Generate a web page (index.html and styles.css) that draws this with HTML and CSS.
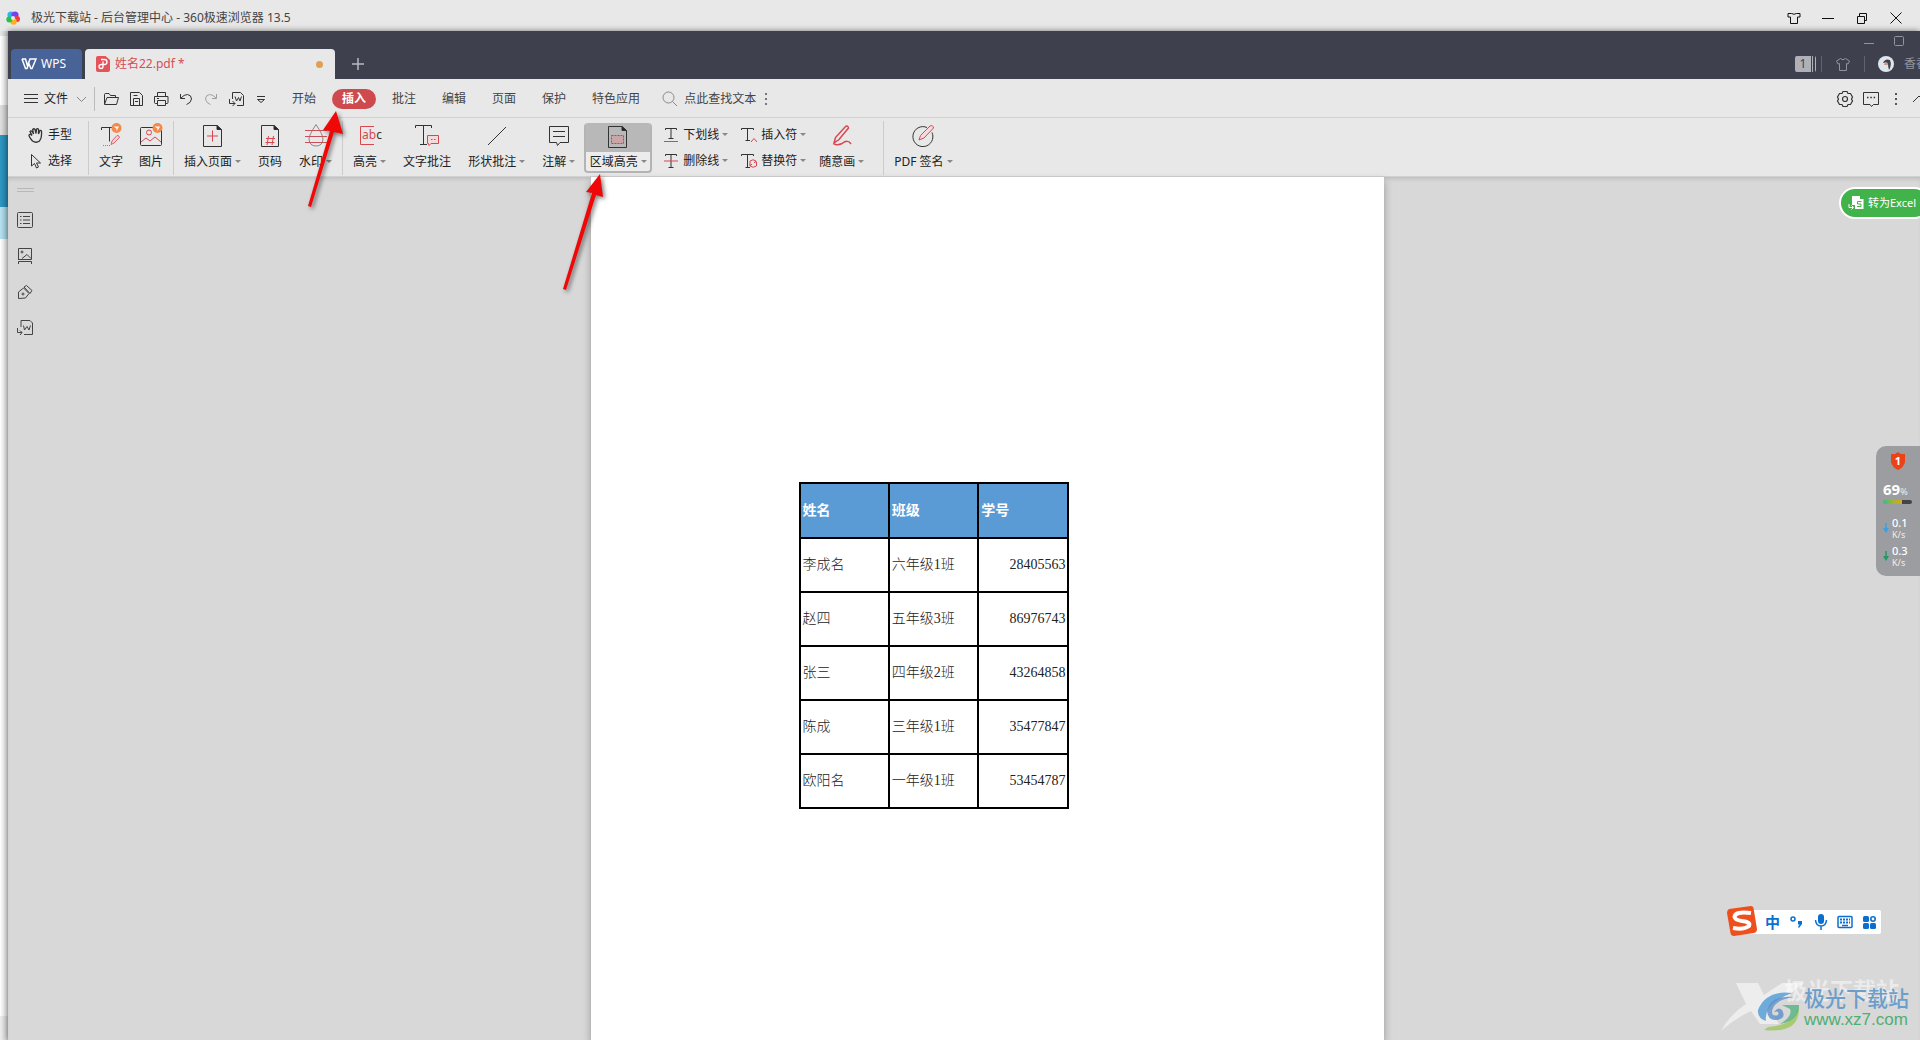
FILE: index.html
```html
<!DOCTYPE html>
<html lang="zh-CN">
<head>
<meta charset="utf-8">
<title>极光下载站 - 后台管理中心 - 360极速浏览器 13.5</title>
<link rel="stylesheet" href="styles.css">
</head>
<body>
<header class="host">
  <svg class="host-logo" width="14" height="14" viewBox="0 0 14 14"><circle cx="5" cy="4" r="3.6" fill="#2fb4ee"/><circle cx="9" cy="4" r="3.6" fill="#7a3ff0"/><circle cx="11" cy="8" r="3" fill="#f23a3a"/><circle cx="7.500" cy="10.500" r="3.200" fill="#ffb01f"/><circle cx="3.300" cy="8.500" r="3" fill="#27c04c"/><circle cx="7" cy="7" r="2" fill="#e8e8e8"/></svg>
  <span class="host-title">极光下载站 - 后台管理中心 - 360极速浏览器 13.5</span>
  <div class="host-buttons">
    <button aria-label="皮肤"><svg width="14" height="14" viewBox="0 0 14 14"><path d="M1 2.500H4.500Q7 4 9.500 2.500H13V6H10.500V12.500H3.500V6H1Z"/></svg></button>
    <button aria-label="最小化"><svg width="14" height="14" viewBox="0 0 14 14"><path d="M1 7.500H13"/></svg></button>
    <button aria-label="还原"><svg width="14" height="14" viewBox="0 0 14 14"><path d="M2.500 5.500H9.500V12.500H2.500ZM4.500 5V2.500H11.500V9.500H10"/></svg></button>
    <button aria-label="关闭"><svg width="14" height="14" viewBox="0 0 14 14"><path d="M1.500 1.500L12.500 12.500M12.500 1.500L1.500 12.500"/></svg></button>
  </div>
</header>
<div class="desk">
  <div class="behind"></div>
  <div class="wps">
    <div class="tabs">
      <button class="wps-home"><svg width="16" height="12" viewBox="0 0 16 12"><path d="M1 1H4.500L6.500 8L9 1H15L11 10.500H9.800L7.200 3.500M1 1L4.500 10.500H6L8 5.500" stroke-width="1.500"/></svg>WPS</button>
      <div class="doc-tab">
        <svg width="14" height="16" viewBox="0 0 14 16"><path d="M2 0H9.500L14 4V14Q14 16 12 16H2Q0 16 0 14V2Q0 0 2 0Z" fill="#e4525a"/><path d="M5 3.500H8.500Q11 3.500 11 6T8.500 8.500H5.500Q3 8.500 3 10.500T5 12.500T7 10.500V5.500" fill="none" stroke="#fff" stroke-width="1.300"/></svg>
        <span>姓名22.pdf *</span><i class="dirty"></i>
      </div>
      <button class="new-tab" aria-label="新建标签"><svg width="14" height="14" viewBox="0 0 14 14"><path d="M7 1V13M1 7H13" stroke-width="1.500"/></svg></button>
      <div class="tabs-right">
        <div class="win-row">
          <svg width="12" height="12" viewBox="0 0 12 12"><path d="M1 8.500H11"/></svg>
          <svg width="12" height="12" viewBox="0 0 12 12"><rect x="1.500" y="1.500" width="9" height="9" rx="1"/></svg>
        </div>
        <div class="status-row">
          <span class="count">1</span><i class="vsep"></i>
          <svg width="16" height="16" viewBox="0 0 16 16"><path d="M5.500 2.500Q8 5 10.500 2.500L14.500 5L13 8L11.500 7.500V14.500H4.500V7.500L3 8L1.500 5Z"/></svg>
          <i class="vsep"></i>
          <svg width="16" height="16" viewBox="0 0 16 16"><circle cx="8" cy="8" r="8" fill="#dfe6ee" stroke="none"/><path d="M5 7Q7 2 12 4Q14 9 11 14Q10 11 10 8Q8 6 5 7Z" fill="#42424a" stroke="none"/><path d="M7 6Q10 6 10 9L6 9Z" fill="#c99a8c" stroke="none"/></svg>
          <span class="user">香香</span>
        </div>
      </div>
    </div>

    <nav class="menu">
      <button class="file"><svg width="16" height="12" viewBox="0 0 16 12"><path d="M1 1.500H15M1 5.500H15M1 9.500H15"/></svg>文件<svg width="11" height="8" viewBox="0 0 11 8"><path d="M1 2L5.500 6.500L10 2" stroke="#888"/></svg></button>
      <i class="msep"></i>
      <div class="quick">
        <button aria-label="打开"><svg width="16" height="16" viewBox="0 0 16 16"><path d="M1.500 13V3.500Q1.500 2.500 2.500 2.500H6L7.500 4.500H12.500V6.500M1.500 13.500L4 6.500H15.500L13.500 13.500Z"/></svg></button>
        <button aria-label="保存"><svg width="16" height="16" viewBox="0 0 16 16"><path d="M2.500 1.500H11.500L14.500 4.500V14.500H2.500ZM5.500 14V7.500H11.500V14M5.500 4.500H9.500M7 10.500H10"/></svg></button>
        <button aria-label="打印"><svg width="16" height="16" viewBox="0 0 16 16"><path d="M4.500 5V1.500H12.500V5M4 12.500H2.500Q1.500 12.500 1.500 11.500V5.500H15V11.500Q15 12.500 14 12.500H13M4.500 9.500H12.500V14.500H4.500ZM4 7.500H6"/></svg></button>
        <button aria-label="撤销"><svg width="16" height="16" viewBox="0 0 16 16"><path d="M2.500 3V7.500H7M3 7Q6 3.500 9.500 3.500Q13.500 4 13.500 8Q13 12 8.500 13.500"/></svg></button>
        <button class="off" aria-label="恢复"><svg width="16" height="16" viewBox="0 0 16 16"><path d="M13.500 3V7.500H9M13 7Q10 3.500 6.500 3.500Q2.500 4 2.500 8Q3 12 7.500 13.500"/></svg></button>
        <button aria-label="转为Word"><svg width="16" height="16" viewBox="0 0 16 16"><path d="M4.500 8V1.500H12.500L15.500 4.500V14.500H9M7 5.500L8.500 10L10.500 6.500L12 10L13.500 5.500M1.500 8V12.500H7M4.500 10L7 12.500L4.500 15"/></svg></button>
        <button aria-label="更多"><svg width="16" height="16" viewBox="0 0 16 16"><path d="M4 5.500H12M4.500 8.500H11.500L8 11.500Z"/></svg></button>
      </div>
      <div class="menu-tabs">
        <a href="#">开始</a><a href="#" class="on">插入</a><a href="#">批注</a><a href="#">编辑</a><a href="#">页面</a><a href="#">保护</a><a href="#">特色应用</a>
      </div>
      <label class="search"><svg width="16" height="16" viewBox="0 0 16 16"><circle cx="6.500" cy="6.500" r="5.500" stroke="#888"/><path d="M10.500 10.500L15 15" stroke="#888"/></svg><input type="text" placeholder="点此查找文本" aria-label="点此查找文本"></label>
      <svg width="4" height="16" viewBox="0 0 4 16"><path d="M1 2H3V4H1ZM1 7H3V9H1ZM1 12H3V14H1Z" fill="#777" stroke="none"/></svg>
      <div class="menu-right">
        <button aria-label="设置"><svg width="18" height="18" viewBox="0 0 18 18"><path d="M7 1.500H11L12 3.500L14.500 3.500L16.500 7L15.500 9L16.500 11L14.500 14.500H12L11 16.500H7L6 14.500H3.500L1.500 11L2.500 9L1.500 7L3.500 3.500L6 3.500Z" stroke-width="1.200"/><circle cx="9" cy="9" r="2.500" stroke-width="1.200"/></svg></button>
        <button aria-label="反馈"><svg width="18" height="18" viewBox="0 0 18 18"><path d="M1.500 2.500H16.500V14.500H11.500L9.500 16.500L8 14.500H1.500Z"/><path d="M5 7.500H6.500M8.300 7.500H9.800M11.600 7.500H13.100" stroke-width="1.500"/></svg></button>
        <svg width="4" height="16" viewBox="0 0 4 16"><path d="M1 2H3V4H1ZM1 7H3V9H1ZM1 12H3V14H1Z" fill="#555" stroke="none"/></svg>
        <button aria-label="收起"><svg width="14" height="18" viewBox="0 0 14 18"><path d="M1 12L7 6L13 12"/></svg></button>
      </div>
    </nav>

    <div class="ribbon">
      <div class="stack first">
        <button><svg width="16" height="16" viewBox="0 0 16 16"><path d="M4.500 14Q1 10 1 8Q2 6.500 4 8.500L2 4.500Q3 3 4.500 5L5.500 7L4.700 2.500Q6 1 7 2.500L8 6.500L8.500 2Q10 1 10.500 2.500V7L12 3.500Q13.800 3 13.500 5Q14 11 11.500 14Q8 16.500 4.500 14Z" stroke-width="1.300"/></svg>手型</button>
        <button><svg width="16" height="16" viewBox="0 0 16 16"><path d="M3.500 1.500V13L6.500 10.500L8.500 15L10.500 14L8.500 10H12.500Z"/></svg>选择</button>
      </div>
      <i class="rsep"></i>
      <div class="group">
        <button class="big"><svg width="24" height="24" viewBox="0 0 24 24"><path d="M2.500 7V4.500H14M10.500 4.500V18.500"/><path d="M4 22.500H12" stroke="#e0616b" stroke-dasharray="1 1"/><path d="M12 21.500L13 18L18 12.500Q20 12 20.500 14.500L15 20Z" stroke="#e0616b" fill="#f5d5d7"/><circle cx="17.500" cy="5" r="5" fill="#f4894c" stroke="none"/><path d="M14.500 3.500H20L17.500 8V5.500Z" fill="#fff" stroke="none"/></svg><span>文字</span></button>
        <button class="big"><svg width="24" height="24" viewBox="0 0 24 24"><rect x="1.500" y="4.500" width="21" height="18" rx="1"/><circle cx="10" cy="9.500" r="2.500" stroke="#d9464f"/><path d="M2 19L7 15L11 18L16 14L22 19" stroke="#d9464f"/><circle cx="18.500" cy="5" r="5" fill="#f4894c" stroke="none"/><path d="M15.500 3.500H21L18.500 8V5.500Z" fill="#fff" stroke="none"/></svg><span>图片</span></button>
      </div>
      <i class="rsep"></i>
      <div class="group wide">
        <button class="big"><svg width="24" height="24" viewBox="0 0 24 24"><path d="M2.500 2.500H16L20.500 6.500V23.500H2.500Z"/><path d="M16 2.500V6.500H20.500Z" fill="#222"/><path d="M11.500 7.500V18.500M6 13H17" stroke="#d9464f"/></svg><span class="drop">插入页面</span></button>
        <button class="big"><svg width="24" height="24" viewBox="0 0 24 24"><path d="M3.500 2.500H16L20.500 6.500V23.500H3.500Z"/><path d="M16 2.500V6.500H20.500Z" fill="#222"/><path d="M10.500 13L9 22M15.500 13L14 22M8 15.500H17M7.500 19.500H16.500" stroke="#d9464f"/></svg><span>页码</span></button>
        <button class="big"><svg width="24" height="24" viewBox="0 0 24 24"><path d="M12 1.500Q19 12 19 16Q18.500 23 12 23Q5.500 23 5 16Q5 12 12 1.500Z" stroke="#888"/><path d="M1 7.500H23M1 13.500H23M1 19.500H23" stroke="#c9505a"/></svg><span class="drop">水印</span></button>
      </div>
      <i class="rsep"></i>
      <div class="group wide">
        <button class="big"><svg width="24" height="24" viewBox="0 0 24 24"><path d="M16 3.500H2.500V21.500H16" stroke="#d9464f"/><text x="4" y="16" class="abc"><tspan class="red">ab</tspan>c</text></svg><span class="drop">高亮</span></button>
        <button class="big"><svg width="24" height="24" viewBox="0 0 24 24"><path d="M.500 5V2.500H16.500V5M8.500 2.500V21.500M5 21.500H12"/><path d="M12.500 12.500H23.500V20.500H16L14 22.500L13.500 20.500H12.500Z" stroke="#d9464f" fill="#f5dadc"/><path d="M16 16.500H17.500M19 16.500H20.500" stroke="#d9464f"/></svg><span>文字批注</span></button>
        <button class="big"><svg width="24" height="24" viewBox="0 0 24 24"><path d="M3 22L21 4"/></svg><span class="drop">形状批注</span></button>
        <button class="big"><svg width="24" height="24" viewBox="0 0 24 24"><path d="M2.500 3.500H21.500V19.500H13L10.500 22.500L9.500 19.500H2.500ZM6 8.500H18M6 13.500H18"/></svg><span class="drop">注解</span></button>
      </div>
      <button class="big picked"><span class="pick-icon"><svg width="24" height="24" viewBox="0 0 24 24"><path d="M2.500 2.500H16L20.500 6.500V23.500H2.500Z"/><path d="M16 2.500V6.500H20.500Z" fill="#222"/><rect x="5.500" y="11.500" width="12" height="8" fill="#c9a5a8" stroke="#c9404a" stroke-dasharray="2 1"/></svg></span><span class="drop">区域高亮</span></button>
      <div class="stack marks">
        <button><svg width="16" height="16" viewBox="0 0 16 16"><path d="M2.500 3V1.500H13.500V3M8 1.500V11.500M5.500 11.500H10.500"/><path d="M1 14.500H15" stroke="#d9464f"/></svg><span class="drop">下划线</span></button>
        <button><svg width="16" height="16" viewBox="0 0 16 16"><path d="M2.500 3V1.500H13.500V3M8 1.500V14.500M5.500 14.500H10.500"/><path d="M1 8H15" stroke="#d9464f"/></svg><span class="drop">删除线</span></button>
      </div>
      <div class="stack marks">
        <button><svg width="16" height="16" viewBox="0 0 16 16"><path d="M.500 3V1.500H12.500V3M6.500 1.500V13.500M4.500 13.500H9"/><path d="M10 15L13 11.500L16 15" stroke="#d9464f"/></svg><span class="drop">插入符</span></button>
        <button><svg width="16" height="16" viewBox="0 0 16 16"><path d="M.500 3V1.500H12.500V3M6.500 1.500V14.500M4.500 14.500H9"/><path d="M9 12V8Q12 5.500 15 8V9.500M15.500 9V13Q12 15.500 9 13V11.500M9 13L11 11M15 8L13 10" stroke="#d9464f"/></svg><span class="drop">替换符</span></button>
      </div>
      <button class="big pen"><svg width="24" height="24" viewBox="0 0 24 24"><path d="M4 20L5.500 14.500L15.500 3.500Q18 2 18.500 5L9 16.500Z" stroke="#d9464f" stroke-width="1.500"/><path d="M4 21Q8 22.500 12 20.500Q18 16 21 21" stroke="#d9464f" stroke-width="1.500"/></svg><span class="drop">随意画</span></button>
      <i class="rsep"></i>
      <div class="group">
        <button class="big"><svg width="24" height="24" viewBox="0 0 24 24"><path d="M16 4.500A10 10 0 1 0 21 9.500"/><path d="M8 17L9.500 12.500L19 3Q22 1.500 22.500 5L13 15Z" stroke="#d9464f" fill="#f3dcdd"/></svg><span class="drop">PDF 签名</span></button>
      </div>
    </div>

    <div class="work">
      <aside class="rail">
        <i class="grip"></i>
        <button aria-label="目录"><svg width="16" height="16" viewBox="0 0 16 16"><rect x=".500" y=".500" width="15" height="15" rx="1"/><path d="M3 4.500H4.500M6 4.500H13M3 8H4.500M6 8H13M3 11.500H4.500M6 11.500H13"/></svg></button>
        <button aria-label="缩略图"><svg width="16" height="16" viewBox="0 0 16 16"><path d="M1.500 12V.500H14.500V11.500H1.500M5 10.500L10 6.500L14 10.500M1.500 16V13.500H14.500V16"/><circle cx="5" cy="4" r="1"/></svg></button>
        <button aria-label="签名"><svg width="16" height="16" viewBox="0 0 16 16"><path d="M1.500 14.500V8L6.500 4L12 9.500L8.500 14Z M7 3L9.500 1.500L15 6.500L13 9.500Z"/><circle cx="6" cy="10" r="1"/></svg></button>
        <button aria-label="转换"><svg width="16" height="16" viewBox="0 0 16 16"><path d="M4 7V.500H13L15.500 3V14.500H7M6.500 5.500L7.500 10L10 6.500L12 10L13.500 5.500M.500 8V12.500H5M3 10.500L5 12.500L3 15"/></svg></button>
      </aside>
      <main class="canvas">
        <article class="page">
          <table>
            <thead><tr><th>姓名</th><th>班级</th><th>学号</th></tr></thead>
            <tbody>
              <tr><td>李成名</td><td>六年级1班</td><td class="num">28405563</td></tr>
              <tr><td>赵四</td><td>五年级3班</td><td class="num">86976743</td></tr>
              <tr><td>张三</td><td>四年级2班</td><td class="num">43264858</td></tr>
              <tr><td>陈成</td><td>三年级1班</td><td class="num">35477847</td></tr>
              <tr><td>欧阳名</td><td>一年级1班</td><td class="num">53454787</td></tr>
            </tbody>
          </table>
        </article>
      </main>
      <button class="excel"><svg width="16" height="16" viewBox="0 0 16 16"><path d="M4 1H12V4H15.500V14H7V10H4Z" fill="#fff" stroke="none"/><path d="M1 9V12.500H5M3.500 10.500L5.500 12.500L3.500 14.500" stroke="#fff"/><path d="M13.500 6.500H9.500V9H13V11.500H9" stroke="#42b34a"/></svg>转为Excel</button>
    </div>
  </div>
</div>

<svg class="arrow arrow-a" width="50" height="110" viewBox="0 0 50 110"><path d="M11 98L33 23L26 22L39 3L46 26L37 24L14 99Z"/></svg>
<svg class="arrow arrow-b" width="60" height="130" viewBox="0 0 60 130"><path d="M12 118L41 22L35 21L49 3L52 26L45 24L15 119Z"/></svg>

<div class="monitor">
  <svg width="16" height="18" viewBox="0 0 16 18"><path d="M8 0L11 2H15V10Q14 15 8 18Q2 15 1 10V2H5Z" fill="#ea4318"/><text x="8" y="13" text-anchor="middle" class="shield">1</text></svg>
  <div class="load"><b>69</b>%</div>
  <div class="meter"></div>
  <div class="rate"><svg width="6" height="12" viewBox="0 0 6 12"><path d="M3 1V7" stroke="#3aa0e0" stroke-width="1.500"/><path d="M0 6H6L3 11Z" fill="#3aa0e0"/></svg><div><b>0.1</b>K/s</div></div>
  <div class="rate"><svg width="6" height="12" viewBox="0 0 6 12"><path d="M3 1V7" stroke="#1f9a62" stroke-width="1.500"/><path d="M0 6H6L3 11Z" fill="#1f9a62"/></svg><div><b>0.3</b>K/s</div></div>
</div>

<div class="ime">
  <svg class="ime-logo" width="32" height="32" viewBox="0 0 32 32"><path d="M3 4L25 1Q27 1 27.500 3L31 24Q31 27 28 28L8 31Q5 31 4.500 28L1 8Q1 5 3 4Z" fill="#ee4f1d"/><path d="M25 8Q9 6 8.500 12Q9 15 16 16Q25 17 23 21Q18 25 7 23" fill="none" stroke="#fff" stroke-width="4"/></svg>
  <b>中</b>
  <svg width="16" height="16" viewBox="0 0 16 16"><circle cx="4" cy="5" r="2" fill="none" stroke="#0b6fd0" stroke-width="1.500"/><path d="M9 7H13V10L10 14L9 13L10.500 10.500H9Z" fill="#0b6fd0"/></svg>
  <svg width="16" height="16" viewBox="0 0 16 16"><rect x="5" y="0" width="6" height="10" rx="3" fill="#0b6fd0"/><path d="M2.500 6Q3 12 8 12T13.500 6M8 12V16" fill="none" stroke="#0b6fd0" stroke-width="1.500"/></svg>
  <svg width="16" height="16" viewBox="0 0 16 16"><rect x="1" y="2.500" width="14" height="11" rx="1" fill="none" stroke="#0b6fd0" stroke-width="1.500"/><path d="M3 5.500H13M3 8.500H13" stroke="#0b6fd0" stroke-width="1.800" stroke-dasharray="2 1"/><path d="M5 11.500H11" stroke="#0b6fd0" stroke-width="1.500"/></svg>
  <svg width="16" height="16" viewBox="0 0 16 16"><rect x="2" y="2" width="6" height="6" rx="1.500" fill="#0b6fd0"/><circle cx="12" cy="5" r="2.200" fill="none" stroke="#0b6fd0" stroke-width="1.600"/><rect x="2" y="9" width="6" height="6" rx="1.500" fill="#0b6fd0"/><rect x="9" y="9" width="6" height="6" rx="1.500" fill="#0b6fd0"/></svg>
</div>

<div class="brand">
  <span class="ghost" aria-hidden="true">极光下载站</span>
  <svg class="brand-art" width="100" height="56" viewBox="0 0 100 56">
    <path d="M16 5H38L44 17L62 5H84L50 31L59 46H40L31 33Q14 41 1 53Q10 36 26 26Z" fill="#fff" opacity=".55"/>
    <path d="M72 15Q46 12 38 32Q37 40 46 43Q43 26 72 15Z" fill="#4d9ad6" opacity=".8"/><path d="M74 19Q50 17 47 33Q48 43 57 42Q67 40 62 32Q58 28 54 34Q60 32 58 37Q52 39 52 33Q54 22 74 19Z" fill="#5b8fc8" opacity=".8"/><path d="M78 28Q76 47 48 49L44 52Q78 56 79 32Z" fill="#9cc75c" opacity=".8"/><path d="M62 27H79Q79 43 60 46Q73 38 70 31Z" fill="#55b282" opacity=".8"/>
  </svg>
  <div class="brand-text"><span>极光下载站</span><a href="#">www.xz7.com</a></div>
</div>
</body>
</html>
```
FILE: styles.css
```css
* { box-sizing: border-box; }
body {
  margin: 0; min-height: 100vh; display: flex; flex-direction: column;
  position: relative; overflow: hidden; background: #e8e8e8; color: #333;
  font: 12px/16px "Noto Sans", "Noto Sans CJK SC", sans-serif;
}
button { border: 0; padding: 0; margin: 0; background: none; font: inherit; color: inherit; display: flex; align-items: center; white-space: nowrap; }
a { color: inherit; text-decoration: none; }
svg { flex: none; display: block; fill: none; stroke: #333; stroke-width: 1; }
i { flex: none; display: block; }

.host { height: 31px; display: flex; align-items: center; gap: 11px; padding: 4px 17px 0 6px; color: #444; }
.host-logo { stroke: none; }
.host-title { flex: 1; }
.host-buttons { display: flex; gap: 20px; }
.host-buttons svg { stroke: #111; }

.desk { flex: 1; display: flex; }
.behind {
  width: 8px; flex: none;
  background: linear-gradient(90deg, transparent, rgba(0,0,0,.15)),
    linear-gradient(#e8e8e8 0 5px, #fff 5px 74px, #e0e0e0 74px 104px, #2d98c4 104px 176px, #b5e3f2 176px 208px, #fff 208px 985px, #eee 985px);
}
.wps { flex: 1; min-width: 0; display: flex; flex-direction: column; overflow: hidden; box-shadow: 0 0 6px rgba(0,0,0,.5); background: #e8e8e8; }

.tabs { height: 48px; display: flex; align-items: flex-end; gap: 3px; padding-left: 3px; background: #3e404d; }
.wps-home { width: 71px; height: 30px; gap: 4px; padding-left: 10px; border-radius: 4px 4px 0 0; background: #486397; color: #fff; }
.wps-home svg { stroke: #fff; }
.doc-tab { width: 250px; height: 30px; display: flex; align-items: center; gap: 5px; padding: 0 12px 0 11px; border-radius: 4px 4px 0 0; background: #e8e8e8; color: #d64c56; }
.doc-tab svg { stroke: none; }
.doc-tab span { flex: 1; }
.dirty { width: 7px; height: 7px; border-radius: 50%; background: #e0a050; }
.new-tab { height: 30px; padding-left: 13px; }
.new-tab svg { stroke: #b8b9c0; }
.tabs-right { margin-left: auto; display: flex; flex-direction: column; align-items: flex-end; gap: 8px; padding-bottom: 6px; }
.tabs-right svg { stroke: #92939c; }
.win-row { display: flex; gap: 18px; padding-right: 15px; }
.status-row { display: flex; align-items: center; gap: 10px; margin-right: -8px; color: #92939c; height: 18px; }
.count { width: 21px; height: 16px; margin-right: -8px; padding-right: 5px; text-align: center; border-radius: 2px; color: #3e404d;
  background: linear-gradient(90deg, #b0b1b8 0 16px, #3e404d 16px 17px, #b0b1b8 17px 18px, #3e404d 18px 20px, #b0b1b8 20px); }
.vsep { width: 1px; height: 16px; margin: 0 3px; background: #62636e; }

.menu { height: 39px; display: flex; align-items: center; padding: 1px 0 0 15px; border-bottom: 1px solid #d2d2d2; color: #222; }
.file { gap: 5px; }
.file svg:last-child { margin-left: 3px; }
.msep { width: 1px; height: 24px; margin: 0 8px 0 7px; background: #bbb; }
.quick { display: flex; gap: 9px; }
.off { opacity: .4; }
.menu-tabs { display: flex; align-items: center; gap: 6px; margin: 0 12px 0 13px; color: #444; }
.menu-tabs a { padding: 2px 10px; border-radius: 10px; }
.menu-tabs .on { background: #cf4a4f; color: #fff; font-weight: bold; }
.search { display: flex; align-items: center; gap: 6px; }
.search input { width: 80px; height: 20px; padding: 0; border: 0; outline: 0; background: none; font: inherit; }
.search input::placeholder { color: #444; opacity: 1; }
.menu-right { margin: 0 -6px 0 auto; display: flex; align-items: center; gap: 8px; }
.menu-right svg + button, .menu-right > svg { margin-left: 6px; }

.ribbon { height: 59px; display: flex; align-items: center; padding: 2px 0 0 20px; border-bottom: 1px solid #d0d0d0; color: #222; }
.stack { display: flex; flex-direction: column; gap: 10px; }
.stack button { gap: 4px; }
.first { padding-right: 6px; }
.rsep { width: 1px; height: 54px; margin: 0 10px; background: #ccc; }
.group { display: flex; gap: 16px; }
.wide { gap: 17px; }
.big { flex-direction: column; gap: 6px; height: 50px; }
.big > span { padding-top: 1px; }
.drop::after { content: ""; display: inline-block; margin-left: 3px; vertical-align: 3px; border: 3px solid transparent; border-top-color: #888; border-bottom: 0; }
.abc { font: 12px "Noto Sans", sans-serif; fill: #333; stroke: none; }
.red { fill: #d9464f; }
.picked { width: 68px; height: 50px; margin: 0 11px 0 9px; gap: 1px; border: 1px solid #b4b4b4; border-width: 0 2px 2px; border-radius: 4px; overflow: hidden; background: #ececec; }
.pick-icon { width: 100%; height: 29px; display: flex; justify-content: center; background: #b8b8b8; }
.marks { margin-right: 13px; }
.pen { margin-right: 9px; }

.work { flex: 1; position: relative; display: flex; background: #d8d8d8; box-shadow: inset 0 4px 4px -2px rgba(0,0,0,.12); }
.rail { width: 46px; flex: none; display: flex; flex-direction: column; gap: 20px; padding: 11px 0 0 9px; }
.rail svg { stroke: #444; }
.grip { width: 17px; height: 4px; border: 1px solid #b8b8b8; border-width: 1px 0; }
.canvas { flex: 1; display: flex; justify-content: center; }
.page { width: 793px; padding: 305px 0 0 208px; background: #fff; box-shadow: 0 4px 8px rgba(0,0,0,.3); }
table { width: 270px; border-collapse: collapse; table-layout: fixed; color: #222; font: 14px/20px "Liberation Serif", "Noto Sans CJK SC", serif; }
th, td { height: 54px; padding: 0 2px; border: 2px solid #000; text-align: left; font-weight: 300; }
th { height: 55px; background: #5b9bd5; color: #fff; font-weight: bold; }
.num { padding: 0 1px; text-align: right; }

.excel { position: absolute; right: -10px; top: 10px; height: 32px; gap: 4px; padding: 0 12px 0 7px; border: 2px solid #fff; border-radius: 16px; background: #42b34a; color: #fff; font-size: 11px; }

.arrow { position: absolute; fill: #f00808; stroke: none; filter: drop-shadow(2px 2px 2px rgba(0,0,0,.5)); }
.arrow-a { left: 297px; top: 108px; }
.arrow-b { left: 551px; top: 171px; }

.monitor { position: absolute; right: 0; top: 446px; width: 44px; height: 130px; padding: 6px 0 0 7px; border-radius: 10px 0 0 10px; background: #9b9da0; color: #eee; font-size: 9px; line-height: 11px; }
.monitor svg { stroke: none; }
.monitor > svg { margin-left: 7px; }
.shield { font: bold 11px "Open Sans", sans-serif; fill: #fff; }
.load { margin-top: 9px; line-height: 16px; white-space: nowrap; }
.load b { font: bold 15px "Open Sans", sans-serif; color: #fff; }
.meter { width: 29px; height: 4px; border-radius: 2px; background: linear-gradient(90deg, #35b995, #8db93c 8px, #e0a51c 19px, #444 19px); }
.rate { display: flex; align-items: center; gap: 3px; margin-top: 4px; }
.meter + .rate { margin-top: 12px; }
.rate b { display: block; font-size: 11px; line-height: 13px; font-weight: 500; color: #fff; }

.ime { position: absolute; right: 39px; bottom: 106px; height: 24px; display: flex; align-items: center; gap: 8px; padding-right: 4px; border-radius: 2px; background: linear-gradient(90deg, transparent 16px, #fff 16px); color: #0b6fd0; }
.ime svg { stroke: none; }
.ime b { width: 16px; font-size: 15px; }
.ime .ime-logo { margin: -2px -1px 0 0; }

.brand { position: absolute; right: 11px; bottom: 6px; width: 185px; height: 56px; }
.brand svg { stroke: none; }
.brand-art { position: relative; left: -4px; }
.ghost { position: absolute; left: 60px; top: -2px; color: rgba(255,255,255,.5); font: bold 23px/26px "Noto Sans CJK SC", sans-serif; white-space: nowrap; }
.brand-text { position: absolute; right: 0; top: 6px; display: flex; flex-direction: column; white-space: nowrap; font: 500 21px/26px "Noto Sans CJK SC", sans-serif; color: #6c9ecb; }
.brand-text a { font: 17px/20px "Liberation Sans", sans-serif; color: #4fae72; }
```
